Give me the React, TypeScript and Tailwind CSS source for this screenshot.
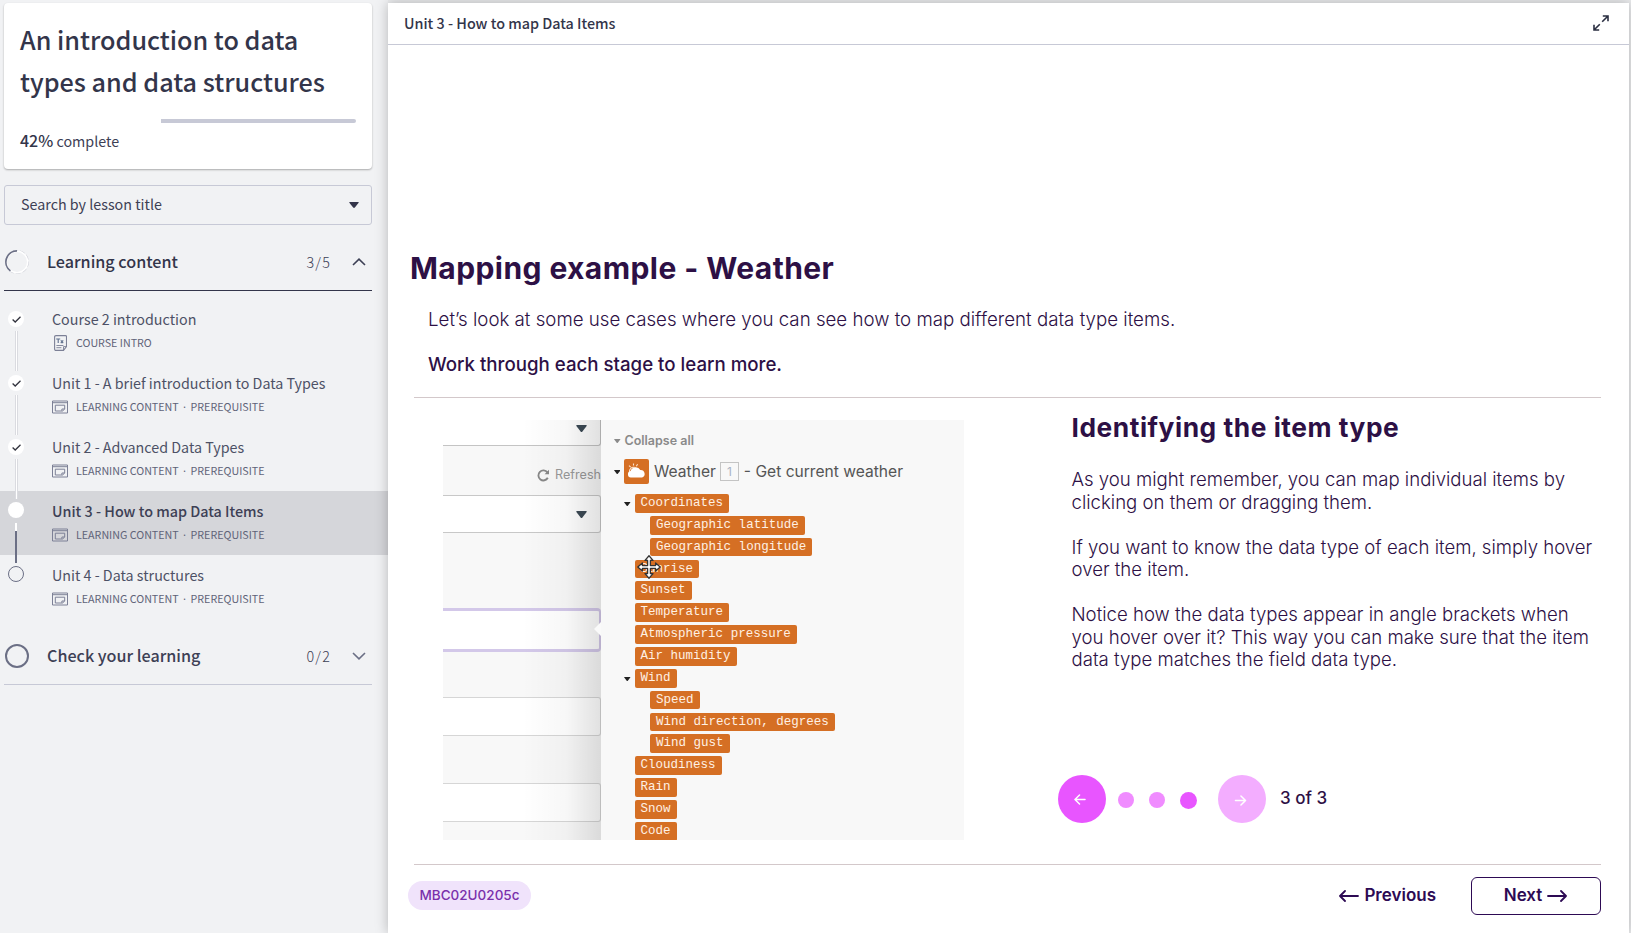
import React from "react";

const SOURCE = "font-['Noto_Sans_CJK_SC',sans-serif]";

const lessons = [
  { title: "Course 2 introduction", kind: "COURSE INTRO", state: "done" },
  { title: "Unit 1 - A brief introduction to Data Types", kind: "LEARNING CONTENT", pre: true, state: "done" },
  { title: "Unit 2 - Advanced Data Types", kind: "LEARNING CONTENT", pre: true, state: "done" },
  { title: "Unit 3 - How to map Data Items", kind: "LEARNING CONTENT", pre: true, state: "current" },
  { title: "Unit 4 - Data structures", kind: "LEARNING CONTENT", pre: true, state: "todo" },
];

const chips = [
  { label: "Coordinates", caret: true },
  { label: "Geographic latitude", sub: true },
  { label: "Geographic longitude", sub: true },
  { label: "Sunrise", cursor: true },
  { label: "Sunset" },
  { label: "Temperature" },
  { label: "Atmospheric pressure" },
  { label: "Air humidity" },
  { label: "Wind", caret: true },
  { label: "Speed", sub: true },
  { label: "Wind direction, degrees", sub: true },
  { label: "Wind gust", sub: true },
  { label: "Cloudiness" },
  { label: "Rain" },
  { label: "Snow" },
  { label: "Code" },
];

function Chevron({ up }: { up?: boolean }) {
  return (
    <svg className="h-[8px] w-[14px]" viewBox="0 0 14 8" fill="none" stroke={up ? "#3d4055" : "#6b6f85"} strokeWidth="1.6">
      <path d={up ? "M1 7 L7 1.2 L13 7" : "M1 1 L7 6.8 L13 1"} />
    </svg>
  );
}

function LessonIcon({ doc }: { doc: boolean }) {
  if (doc) {
    return (
      <svg className="mr-[9px] ml-[2px] h-[16px] w-[13px]" viewBox="0 0 13 16" fill="none" stroke="#7c8096">
        <path d="M2 .6h9.5q1 0 1 1v10l-3 3.8H2q-1.4 0-1.4-1.4V2Q.6.6 2 .6z" strokeWidth="1.1" />
        <path d="M12.4 11.6H9.5v3.6M2.4 10.5h7M2.4 12.7h5" strokeWidth=".9" />
        <path d="M2.2 4h4M4.2 4v4M6.8 5.4l2.4 2.8M9.2 5.4L6.8 8.2" strokeWidth="1.1" stroke="#5d6e8c" />
      </svg>
    );
  }
  return (
    <svg className="mr-2 h-[14px] w-4" viewBox="0 0 16 14" fill="none" stroke="#7c8096" strokeWidth="1">
      <path d="M.5 1h15v12H.5zM.5 2.7h15M3.3 5.2h9.4v3.9L10.5 11H3.3zM12.5 9h-2.6v1.8" />
    </svg>
  );
}

function Caret({ className }: { className: string }) {
  return (
    <svg className={className} viewBox="0 0 12 7" preserveAspectRatio="none" fill="currentColor">
      <path d="M.8 0h10.4q.8 0 .4 1L7 6.4Q6 7.4 5 6.4L.4 1Q0 0 .8 0z" />
    </svg>
  );
}

function Arrow({ className, left, w = 20, sw = 1.8 }: { className: string; left?: boolean; w?: number; sw?: number }) {
  return (
    <svg
      className={className}
      viewBox={`0 0 ${w} 12`}
      fill="none"
      stroke="currentColor"
      strokeWidth={sw}
      strokeLinecap="round"
      strokeLinejoin="round"
    >
      {left ? <path d={`M${w - 1} 6H1.2M6 1L1 6l5 5`} /> : <path d={`M1 6H${w - 1.2}M${w - 6} 1l5 5-5 5`} />}
    </svg>
  );
}

function Marker({ state, last }: { state: string; last: boolean }) {
  return (
    <div className="flex w-8 shrink-0 flex-col items-center pt-[11px]">
      {state === "todo" ? (
        <div className="h-4 w-4 shrink-0 rounded-full border border-[#6b6f85]" />
      ) : (
        <div className={`flex h-4 w-4 shrink-0 items-center justify-center rounded-full bg-white ${state === "done" ? "mt-px" : ""}`}>
          {state === "done" && (
            <svg className="h-[7px] w-[9px]" viewBox="0 0 9 7" fill="none" stroke="#33343f" strokeWidth="1.3">
              <path d="M.6 3.6L3.2 6 8.5.8" />
            </svg>
          )}
        </div>
      )}
      {!last && state === "done" && (
        <div className="mt-1 ml-px h-10 w-[3px] shrink-0 border-x border-[#dadbe0] bg-white" />
      )}
      {state === "current" && (
        <div className="mt-[5px] h-10 w-[2px] shrink-0 bg-linear-to-b from-white from-20% to-[#6b6f85] to-20%" />
      )}
    </div>
  );
}

function Sidebar() {
  return (
    <aside className={`w-[388px] shrink-0 bg-[#f1f2f4] pt-[3px] text-[#3d4055] ${SOURCE}`}>
      <div className="mx-1 h-[166px] w-[368px] rounded bg-white px-4 pt-[15px] shadow-[0_1px_2px_rgba(0,0,0,0.3)]">
        <h1 className="text-[25.2px] leading-[42px] font-medium whitespace-nowrap text-[#33354a]">
          An introduction to data
          <br />
          types and data structures
        </h1>
        <div className="mt-[17px] flex h-1">
          <div className="w-[141px]" />
          <div className="grow rounded-r-sm bg-[#c7c9d6]" />
        </div>
        <p className="mt-[5px] text-[14.3px] leading-6 font-normal">
          <span className="text-[16px] font-medium text-[#33354a]">42%</span> complete
        </p>
      </div>

      <div className="mx-1 mt-4 flex h-10 w-[368px] items-center justify-between rounded-[3px] border border-[#c7c9d6] pr-3 pl-4 text-[14.3px]">
        <span className="pb-[2px]">Search by lesson title</span>
        <Caret className="h-[6px] w-[10px] text-[#33354a]" />
      </div>

      <div className="mx-1 mt-2 flex h-[58px] w-[368px] items-center border-b border-[#33354a]">
        <svg className="ml-px h-6 w-6" viewBox="0 0 24 24" fill="none">
          <circle cx="12" cy="12" r="11.3" stroke="#cfd0d8" strokeWidth="1.2" strokeDasharray="5 2" />
          <circle cx="12" cy="12" r="10.7" stroke="#fff" strokeWidth="1.4" />
          <path d="M12 .9A11.1 11.1 0 0 0 5.4 20.9" stroke="#6b6f85" strokeWidth="1.7" />
        </svg>
        <span className="ml-[18px] grow text-[16.15px] leading-[23px] font-medium text-[#33354a]">Learning content</span>
        <span className="text-[14.3px] font-light tracking-[1.2px]">3/5</span>
        <span className="mr-[6px] ml-[21px]">
          <Chevron up />
        </span>
      </div>

      <ul className="mt-2">
        {lessons.map((l, i) => (
          <li key={l.title} className={`flex h-16 ${l.state === "current" ? "bg-[#d5d6da]" : ""}`}>
            <Marker state={l.state} last={i === lessons.length - 1} />
            <div className="ml-5 pt-2 whitespace-nowrap">
              <div
                className={
                  l.state === "current"
                    ? "text-[14.35px] leading-6 font-medium text-[#3d4055]"
                    : "text-[14.3px] leading-6 text-[#4d5166]"
                }
              >
                {l.title}
              </div>
              <div className="mt-1 flex h-4 items-center text-[10.7px] leading-4 text-[#5f6378]">
                <LessonIcon doc={!l.pre} />
                <span>{l.kind}</span>
                {l.pre && (
                  <>
                    <span className="mx-[4.4px] pt-px font-['Inter',sans-serif]">·</span>
                    <span>PREREQUISITE</span>
                  </>
                )}
              </div>
            </div>
          </li>
        ))}
      </ul>

      <div className="mx-1 mt-2 flex h-[58px] w-[368px] items-center border-b border-[#c7c9d6]">
        <div className="ml-px h-6 w-6 rounded-full border-2 border-[#6b6f85]" />
        <span className="ml-[18px] grow text-[16.15px] leading-[23px] font-medium">Check your learning</span>
        <span className="text-[14.3px] font-light tracking-[1.2px]">0/2</span>
        <span className="mr-[6px] ml-[21px]">
          <Chevron />
        </span>
      </div>
    </aside>
  );
}

function MoveCursor() {
  return (
    <svg className="absolute top-[-5px] left-[2px] h-6 w-6" viewBox="0 0 24 24" fill="#fff" stroke="#333" strokeWidth="1.3" strokeLinejoin="round">
      <path d="M12 .8l4 4.6h-2.6v5.2h5.2V8l4.6 4-4.6 4v-2.6h-5.2v5.2H16l-4 4.6-4-4.6h2.6v-5.2H5.4V16L.8 12l4.6-4v2.6h5.2V5.4H8z" />
    </svg>
  );
}

function MappingShot() {
  return (
    <div className="flex h-[420px] w-[521px] overflow-hidden bg-[#f8f8f8] font-['Inter',sans-serif]">
      <div className="relative h-full w-[158px] shrink-0 overflow-hidden">
        <div className="flex h-[26px] items-start justify-end rounded-br-[3px] border-r border-b border-[#c4c4c4] bg-white pt-[5px] pr-[13px]">
          <Caret className="h-[7px] w-[11px] text-[#3c4a55]" />
        </div>
        <div className="mt-[19px] flex h-5 items-center justify-end text-[12.6px] leading-5 text-[#999]">
          <svg className="mr-[5px] h-[13px] w-[13px]" viewBox="0 0 13 13" fill="none" stroke="#888" strokeWidth="1.9">
            <path d="M10.8 8.8A5 5 0 1 1 10.4 3.4" />
            <path d="M12 .8v4.4H7.6z" fill="#888" stroke="none" />
          </svg>
          Refresh
        </div>
        <div className="mt-[10px] flex h-[38px] items-center justify-end rounded-r-[3px] border-y border-r border-[#c8c8c8] bg-white pt-px pr-[13px]">
          <Caret className="h-[7px] w-[11px] text-[#3c4a55]" />
        </div>
        <div className="mt-[75px] h-[44px] rounded-r-[4px] border-y-[3px] border-r-2 border-[#d3c8e9] bg-white" />
        <div className="mt-[45px] h-[39px] rounded-r-[3px] border-y border-r border-[#d6d6d6] bg-white" />
        <div className="mt-[47px] h-[39px] rounded-r-[3px] border-y border-r border-[#d6d6d6] bg-white" />
        <div className="absolute inset-0 bg-linear-to-r from-transparent from-50% via-black/3 via-78% to-black/12" />
        <svg className="absolute top-[202px] right-0 h-[14px] w-[7px]" viewBox="0 0 7 14" fill="#fafafa">
          <path d="M7 0v14L0 7z" />
        </svg>
      </div>

      <div className="pt-3 text-[#555]">
        <div className="flex h-[18px] items-center pl-[13px] text-[12.5px] font-semibold text-[#8a8a8a]">
          <Caret className="mr-[4px] h-1 w-[6.5px]" />
          Collapse all
        </div>
        <div className="mt-[9px] flex h-[25px] items-center pl-[12.5px] text-[15.6px]">
          <Caret className="mr-[4px] h-1 w-[6.5px] text-[#222]" />
          <svg className="h-[25px] w-[25px]" viewBox="0 0 25 25">
            <rect width="25" height="25" rx="2" fill="#d56f24" />
            <path
              d="M5.5 13a4 4 0 0 1 5-4.6M9.5 4.5v2M5 6.6l1.7 1.6M13.6 5.2l-1.3 2"
              stroke="#fbe3cf"
              strokeWidth="1.1"
              fill="none"
            />
            <path d="M6.8 18.6a3.3 3.3 0 0 1-.2-6.5 5.3 5.3 0 0 1 9.7-1.2 4 4 0 0 1 1.8 7.7z" fill="#fff" />
          </svg>
          <span className="ml-[5px]">Weather</span>
          <span className="ml-1 flex h-[19px] w-[19px] items-center justify-center border border-[#c4c4c4] text-[12px] text-[#a9b3c4]">
            1
          </span>
          <span className="ml-[5px] whitespace-nowrap">- Get current weather</span>
        </div>
        <div className="mt-[10px]">
          {chips.map((c) => (
            <div key={c.label} className={`flex h-[21.87px] items-start ${c.sub ? "pl-[49px]" : c.caret ? "pl-[23px]" : "pl-[33.5px]"}`}>
              {c.caret && <Caret className="mt-[8px] mr-1 h-1 w-[6.5px] shrink-0 text-[#222]" />}
              <span className="relative h-[18.7px] rounded-[2px] bg-[#d56f24] px-[6px] font-['Liberation_Mono',monospace] text-[12.53px] leading-[19.6px] whitespace-nowrap text-[#fff1e4]">
                {c.label}
                {c.cursor && <MoveCursor />}
              </span>
            </div>
          ))}
        </div>
      </div>
    </div>
  );
}

function Pager() {
  return (
    <div className="-ml-[13.5px] mt-[104.5px] flex h-[48px] items-center">
      <div className="flex h-[47.5px] w-[47.5px] items-center justify-center rounded-full bg-[#e855ff] pr-[3px] text-white">
        <Arrow left w={13} sw={1.6} className="h-[11px] w-3" />
      </div>
      <div className="mt-[2px] ml-[12.5px] h-4 w-4 rounded-full bg-[#f08cff]" />
      <div className="mt-[2px] ml-[14.5px] h-4 w-4 rounded-full bg-[#f08cff]" />
      <div className="mt-[2px] ml-[15.5px] h-[17px] w-[17px] rounded-full bg-[#e855ff]" />
      <div className="ml-[21px] flex h-[47.5px] w-[47.5px] items-center justify-center rounded-full bg-[#f3adff] pt-[3px] pr-[3px] text-white">
        <Arrow w={13} sw={1.6} className="h-[11px] w-[13px]" />
      </div>
      <span className="ml-[14.5px] pb-[2px] text-[17px] leading-6 font-medium">3 of 3</span>
    </div>
  );
}

export default function App() {
  return (
    <div className="flex h-[933px] w-[1631px] overflow-hidden bg-[#ebecee]">
      <Sidebar />
      <main className="relative mt-[3px] flex w-[1241px] shrink-0 flex-col bg-white font-['Inter',sans-serif] text-[#2d1045] shadow-[0_0_12px_rgba(0,0,0,0.25)]">
        <header className={`flex h-[42px] items-center justify-between border-b border-[#c7c9d6] pr-5 pb-px pl-4 ${SOURCE}`}>
          <span className="text-[14.35px] font-medium text-[#33354a]">Unit 3 - How to map Data Items</span>
          <svg className="h-4 w-4" viewBox="0 0 16 16" fill="none" stroke="#2b2f42" strokeWidth="1.6">
            <path d="M9.2 6.8L15 1M9.8 1H15v5.2M6.8 9.2L1 15M6.2 15H1V9.8" />
          </svg>
        </header>

        <div className="pt-[203px]">
          <h2 className="ml-[22px] text-[30px] leading-10 font-bold tracking-[0.42px]">Mapping example - Weather</h2>
          <p className="mt-5 ml-[40px] text-[18.69px] leading-6 font-light">
            Let’s look at some use cases where you can see how to map different data type items.
          </p>
          <p className="mt-[21px] ml-[40px] text-[18.68px] leading-6 font-medium">Work through each stage to learn more.</p>
        </div>

        <div className="mt-5 mr-[28px] ml-[26px] flex h-[468px] border-y border-[#d3c8ca]">
          <div className="mt-[22px] ml-[29px]">
            <MappingShot />
          </div>
          <section className="ml-[107.5px] pt-[13px]">
            <h3 className="text-[26.3px] leading-[34px] font-bold tracking-[0.55px]">Identifying the item type</h3>
            <div className="mt-[23px] flex flex-col gap-[22.5px] text-[18.6px] leading-[22.5px] font-light whitespace-nowrap">
              <p>
                As you might remember, you can map individual items by
                <br />
                clicking on them or dragging them.
              </p>
              <p>
                If you want to know the data type of each item, simply hover
                <br />
                over the item.
              </p>
              <p>
                Notice how the data types appear in angle brackets when
                <br />
                you hover over it? This way you can make sure that the item
                <br />
                data type matches the field data type.
              </p>
            </div>
            <Pager />
          </section>
        </div>

        <footer className="mr-7 ml-5 flex items-start justify-between pt-3">
          <span className="mt-1 flex h-[29px] w-[123px] items-center justify-center rounded-full bg-[#f0e3fb] text-[13.5px] font-medium text-[#7a30ab]">
            MBC02U0205c
          </span>
          <div className="flex h-[38px] items-center text-[17px] font-semibold text-[#2d0a54]">
            <Arrow left className="mr-[5px] h-3 w-5" />
            <span className="pb-px">Previous</span>
            <div className="ml-[35px] flex h-[38px] w-[130px] items-center justify-center rounded-md border-[1.5px] border-[#2d0a54] pr-px">
              <span className="pb-px">Next</span>
              <Arrow className="ml-[5px] h-3 w-5" />
            </div>
          </div>
        </footer>
      </main>
    </div>
  );
}
